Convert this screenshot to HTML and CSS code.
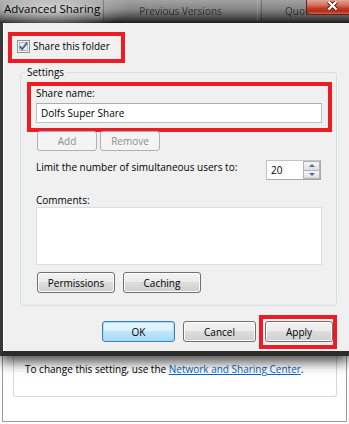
FILE: index.html
```html
<!DOCTYPE html>
<html lang="en">
<head>
  <meta charset="UTF-8">
  <title>Advanced Sharing</title>
  <link rel="stylesheet" href="styles.css">
</head>
<body>
  <div class="dialog">
    <div class="titlebar">
      <div class="title">Advanced Sharing</div>
      <div class="ghost-tab tab-prev">Previous Versions</div>
      <div class="ghost-tab tab-quota">Quota</div>
      <div class="close-btn">
        <svg width="11" height="9" viewBox="0 0 11 9">
          <path d="M1.5 0.5 9.5 8.5 M9.5 0.5 1.5 8.5" stroke="#4a1c12" stroke-width="4" fill="none"/>
          <path d="M1.5 0.5 9.5 8.5 M9.5 0.5 1.5 8.5" stroke="#ffffff" stroke-width="2.2" fill="none"/>
        </svg>
      </div>
    </div>

    <div class="frame">
      <div class="mark share-check">
        <span class="checkbox">
          <svg width="13" height="13" viewBox="0 0 13 13">
            <defs>
              <linearGradient id="cb" x1="0" y1="0" x2="1" y2="1">
                <stop offset="0" stop-color="#dfe3e8"/>
                <stop offset="1" stop-color="#f9f9f9"/>
              </linearGradient>
            </defs>
            <rect x="0.5" y="0.5" width="12" height="12" fill="#f4f4f4" stroke="#8e8f8f"/>
            <rect x="2.5" y="2.5" width="8" height="8" fill="url(#cb)" stroke="#b0b6bd"/>
            <path d="M2.8 6.4 5.2 9 10.2 2.6" fill="none" stroke="#4a5f97" stroke-width="1.8"/>
          </svg>
        </span>
        <span class="check-label">Share this folder</span>
      </div>

      <fieldset class="settings">
        <legend>Settings</legend>
        <div class="mark share-name">
          <div class="label">Share name:</div>
          <input class="field" type="text" value="Dolfs Super Share">
        </div>
        <div class="btn-row add-row">
          <button class="btn small" disabled>Add</button>
          <button class="btn small" disabled>Remove</button>
        </div>
        <div class="limit-row">
          <span>Limit the number of simultaneous users to:</span>
          <div class="spin">
            <span class="spin-val">20</span>
            <span class="spin-btns">
              <span class="spin-btn"><span class="arrow-up"></span></span>
              <span class="spin-btn"><span class="arrow-down"></span></span>
            </span>
          </div>
        </div>
        <div class="label comments-label">Comments:</div>
        <textarea class="comments"></textarea>
        <div class="btn-row perm-row">
          <button class="btn wide">Permissions</button>
          <button class="btn wide">Caching</button>
        </div>
      </fieldset>

      <div class="dialog-buttons">
        <button class="btn default">OK</button>
        <button class="btn">Cancel</button>
        <div class="mark apply-mark">
          <button class="btn apply">Apply</button>
        </div>
      </div>
    </div>
  </div>

  <div class="sheet">
    <div class="sheet-group">
      To change this setting, use the <a href="#">Network and Sharing Center</a>.
    </div>
  </div>
</body>
</html>
```

FILE: styles.css
```css
body {
  margin: 0;
  width: 349px;
  height: 424px;
  overflow: hidden;
  background: #ffffff;
  font-family: "Open Sans", "Segoe UI", sans-serif;
  font-size: 10px;
  color: #000;
}

/* dialog window */
.dialog {
  position: relative;
  z-index: 1;
  box-shadow: 0 6px 12px rgba(0, 0, 0, 0.7);
}

.titlebar {
  position: relative;
  height: 23px;
  display: flex;
  align-items: flex-start;
  overflow: hidden;
  background:
    radial-gradient(ellipse 80px 22px at 50px 8px, rgba(225, 225, 225, 0.75), rgba(225, 225, 225, 0)),
    linear-gradient(#a2a2a2 0%, #868686 40%, #4a4a4a 78%, #1c1c1c 100%);
}

.title {
  width: 103px;
  flex-shrink: 0;
  padding-left: 4px;
  box-sizing: border-box;
  font-size: 11.5px;
  line-height: 18px;
  white-space: nowrap;
  text-shadow: 0 0 6px rgba(255, 255, 255, 0.8);
}

.ghost-tab {
  height: 21px;
  box-sizing: border-box;
  padding-top: 4px;
  line-height: 14px;
  color: rgba(20, 20, 20, 0.75);
  border-left: 1px solid rgba(0, 0, 0, 0.25);
  border-right: 1px solid rgba(255, 255, 255, 0.15);
  white-space: nowrap;
  filter: blur(0.3px);
}

.tab-prev {
  width: 155px;
  flex-shrink: 0;
  text-align: center;
}

.tab-quota {
  margin-left: 3px;
  padding-left: 23px;
  width: 90px;
  flex-shrink: 0;
}

.close-btn {
  position: absolute;
  top: -1px;
  right: -4px;
  width: 47px;
  height: 16px;
  box-sizing: border-box;
  padding: 1px 0 0 20px;
  border: 1px solid #5e2419;
  border-radius: 0 0 0 4px;
  background: linear-gradient(#e2a596 0%, #d6735e 35%, #c23a21 60%, #b22d16 80%, #d2654c 100%);
}

.close-btn svg {
  display: block;
}

.frame {
  height: 333px;
  box-sizing: border-box;
  padding: 9px 0 0 5px;
  background: #f0f0f0;
  border-left: 3px solid #383838;
  border-bottom: 5px solid #2c2c2c;
  box-shadow: inset 1px 0 0 #ffffff;
}

/* red highlight boxes */
.mark {
  border: 4px solid #ed1c24;
  box-sizing: border-box;
}

.share-check {
  width: 117px;
  height: 31px;
  padding: 4px 0 0 5px;
  display: flex;
  align-items: flex-start;
  gap: 3px;
}

.checkbox svg {
  display: block;
}

.check-label {
  line-height: 13px;
  white-space: nowrap;
}

.settings {
  width: 317px;
  margin: 2px 0 0 12px;
  padding: 0 0 12px 0;
  box-sizing: border-box;
  border: 1px solid #d5dfe5;
  border-radius: 3px;
  min-inline-size: 0;
}

.settings legend {
  margin-left: 4px;
  padding: 0 2px;
  line-height: 14px;
}

.share-name {
  width: 305px;
  margin: 3px 0 0 6px;
  padding: 0 5px 5px 5px;
}

.label {
  line-height: 14px;
}

.field {
  display: block;
  width: 286px;
  height: 20px;
  margin-top: 3px;
  padding: 0 0 0 4px;
  box-sizing: border-box;
  font: inherit;
  color: #000;
  background: #fff;
  border: 1px solid #b9c4d0;
  border-top-color: #abadb3;
  outline: none;
}

.btn-row {
  display: flex;
  margin-left: 16px;
}

.add-row {
  margin-top: -1px;
  gap: 3px;
}

.perm-row {
  margin-top: 7px;
  gap: 8px;
}

.btn {
  height: 21px;
  padding: 0;
  font: inherit;
  color: #000;
  border: 1px solid #707070;
  border-radius: 3px;
  background: linear-gradient(#f2f2f2 0%, #ebebeb 49%, #dddddd 50%, #cfcfcf 100%);
  box-shadow: inset 0 0 0 1px #fcfcfc;
}

.btn.small {
  width: 60px;
  height: 20px;
}

.btn.wide {
  width: 78px;
}

.btn:disabled {
  color: #8d8d8d;
  border-color: #adb2b5;
  background: #f4f4f4;
  box-shadow: none;
}

.limit-row {
  width: 285px;
  margin: 9px 0 0 15px;
  display: flex;
  justify-content: space-between;
  align-items: flex-start;
  line-height: 14px;
}

.spin {
  width: 55px;
  height: 20px;
  box-sizing: border-box;
  display: flex;
  background: #fff;
  border: 1px solid #c4c4c4;
  border-right-color: #a8a8a8;
  border-bottom-color: #a8a8a8;
}

.spin-val {
  flex: 1;
  padding: 2px 0 0 4px;
  line-height: 14px;
}

.spin-btns {
  width: 17px;
  box-sizing: border-box;
  padding: 1px;
  display: flex;
  flex-direction: column;
  gap: 1px;
  background: #b4b4b4;
}

.spin-btn {
  flex: 1;
  display: flex;
  align-items: center;
  justify-content: center;
  background: linear-gradient(#f6f6f6, #dedede);
}

.arrow-up {
  border-left: 3px solid transparent;
  border-right: 3px solid transparent;
  border-bottom: 3px solid #4a6aa8;
}

.arrow-down {
  border-left: 3px solid transparent;
  border-right: 3px solid transparent;
  border-top: 3px solid #4a6aa8;
}

.comments-label {
  margin: 14px 0 0 15px;
  line-height: 13px;
}

.comments {
  display: block;
  width: 286px;
  height: 58px;
  margin-left: 15px;
  box-sizing: border-box;
  border: 1px solid #dadde1;
  background: #fff;
  resize: none;
  font: inherit;
}

.dialog-buttons {
  display: flex;
  align-items: flex-start;
  margin: 9px 0 0 94px;
}

.dialog-buttons > .btn {
  width: 73px;
  margin-top: 6px;
  margin-right: 8px;
}

.dialog-buttons > .btn + .btn {
  margin-right: 3px;
}

.btn.default {
  border-color: #3c7fb1;
  background: linear-gradient(#eaf6fd 0%, #d9f0fc 49%, #bee6fd 50%, #a7d9f5 100%);
  box-shadow: inset 0 0 0 1px #9fe0fb;
}

.apply-mark {
  width: 78px;
  height: 34px;
  padding: 2px 0 0 2px;
}

.btn.apply {
  width: 68px;
}

/* property sheet behind the dialog */
.sheet {
  width: 345px;
  height: 66px;
  margin-left: 2px;
  box-sizing: border-box;
  padding: 0 9px 0 10px;
  border: 1px solid #9c9c9c;
  border-top: 0;
}

.sheet-group {
  width: 324px;
  height: 41px;
  box-sizing: border-box;
  padding: 6px 0 0 11px;
  line-height: 14px;
  white-space: nowrap;
  border: 1px solid #d5d9dd;
  border-top: 0;
  border-radius: 0 0 3px 3px;
}

.sheet-group a {
  color: #0066cc;
}
```
